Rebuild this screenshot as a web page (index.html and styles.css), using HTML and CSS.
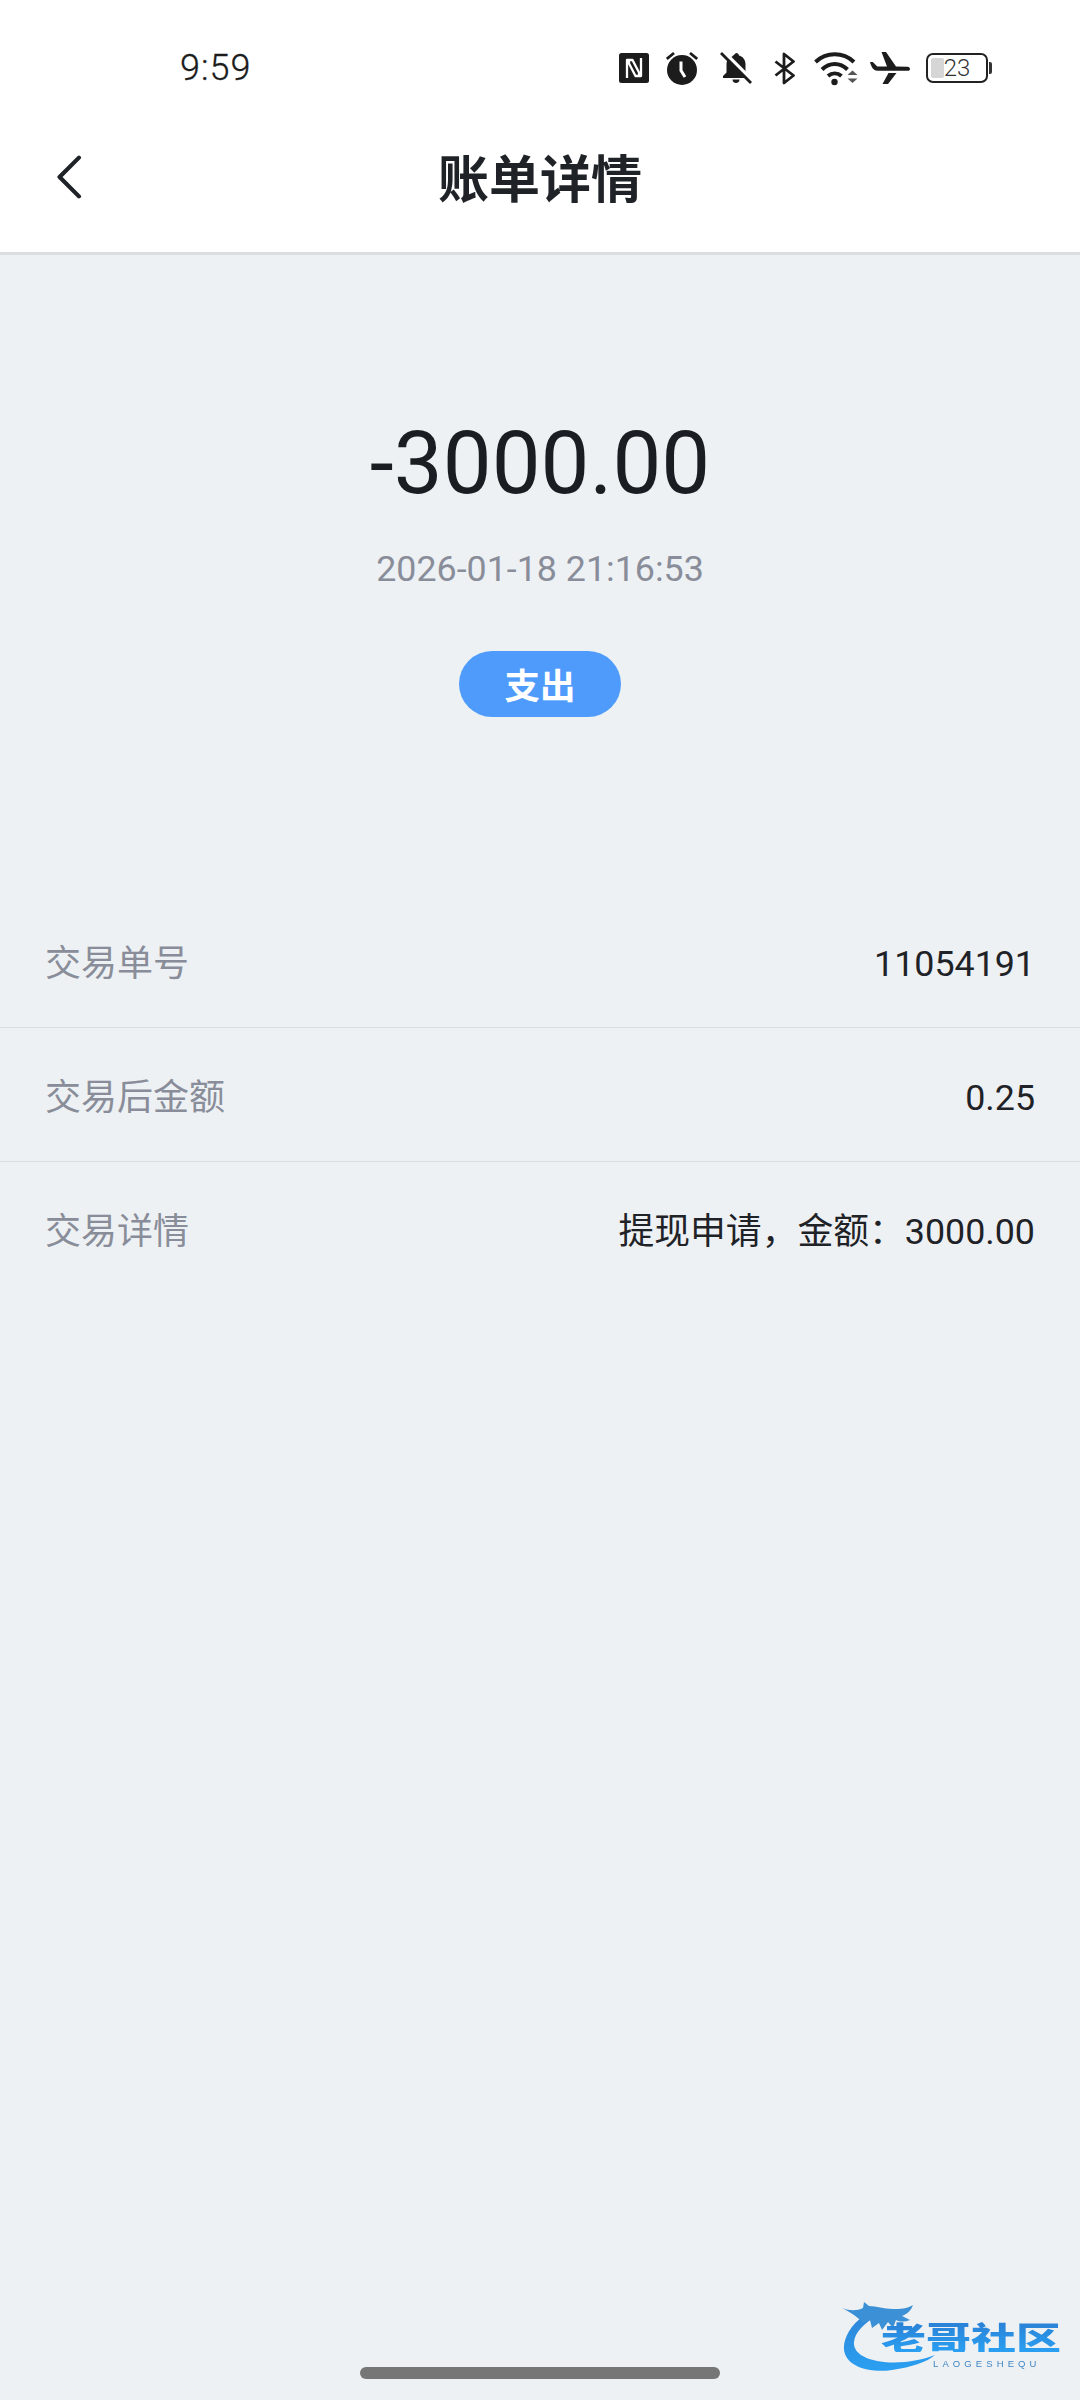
FILE: index.html
```html
<!DOCTYPE html>
<html lang="zh-CN">
<head>
<meta charset="utf-8">
<title>账单详情</title>
<link rel="stylesheet" href="styles.css">
</head>
<body>
<div class="page">
  <div class="top">
    <div class="status">
      <span class="time">9:59</span>
      <div class="status-icons">
        <svg class="ic-nfc" viewBox="0 0 30 30"><rect width="30" height="30" rx="2.500" fill="#1c1c1c"/><path d="M8 25V7h5.500L20 19.500V24" fill="none" stroke="#fff" stroke-width="2.300" stroke-linejoin="round"/><path d="M22 5V23h-5.500L10 10.500V6" fill="none" stroke="#fff" stroke-width="2.300" stroke-linejoin="round"/></svg>
        <svg class="ic-alarm" viewBox="0 0 32 34"><circle cx="16" cy="19" r="15" fill="#1c1c1c"/><path d="M.8 8 8 2M31.200 8 24 2" stroke="#1c1c1c" stroke-width="2.800"/><path d="M15 10.500V19.500L19 26" fill="none" stroke="#fff" stroke-width="3"/></svg>
        <svg class="ic-bell" viewBox="0 0 32 32"><path d="M16 1c1.800 0 2.800 1 3 2.500 4 1 6.500 4.500 6.500 8.500v7.500L29 24v2H3v-2l3.500-3.500V12c0-1 .2-2 .5-3z" fill="#1c1c1c"/><path d="M12.500 27.500h7c0 2-1.500 3.500-3.500 3.500s-3.500-1.500-3.500-3.500z" fill="#1c1c1c"/><path d="M3 -1 33 29" stroke="#fff" stroke-width="3.500"/><path d="M1 1 31 31" stroke="#1c1c1c" stroke-width="2.800"/></svg>
        <svg class="ic-bt" viewBox="0 0 21 33"><path d="M1.500 9.500 19.500 23.500 10 31V2L19.500 9.500 1.500 23.500" fill="none" stroke="#1c1c1c" stroke-width="2.800" stroke-linejoin="round"/></svg>
        <svg class="ic-wifi" viewBox="0 0 44 35"><path d="M1.500 11C12.500 .8 29 .8 40 11" fill="none" stroke="#1c1c1c" stroke-width="4"/><path d="M8 18.500C15.500 11 26 11 33.500 18.500" fill="none" stroke="#1c1c1c" stroke-width="4"/><path d="M14 25C18 21.500 23.500 21.500 27.500 25" fill="none" stroke="#1c1c1c" stroke-width="4"/><circle cx="20.500" cy="31" r="3.200" fill="#1c1c1c"/><path d="M33.500 24 38.500 19.500l5 4.500zM33.500 27.500h10L38.500 32z" fill="#555"/></svg>
        <svg class="ic-plane" viewBox="0 0 40 32"><path d="M0 10h2.800l4.500 4.500h9.700L11.500 0h4.500l10 14.500 11.500.3c2 .2 2.500 1.500 2.500 2.200 0 .8-.5 1.800-2.500 1.800H7.500C3 18.800 1 14 0 10z" fill="#1c1c1c"/><path d="M12.500 32l6-11h8L18 32z" fill="#1c1c1c"/></svg>
        <div class="battery">
          <div class="battery-body"><span class="battery-fill"></span><span class="battery-num">23</span></div>
          <span class="battery-cap"></span>
        </div>
      </div>
    </div>
    <div class="nav">
      <button class="back" aria-label="返回">
        <svg viewBox="0 0 24 42"><path d="M21.500 2.500 3 21l18.500 18.500" fill="none" stroke="#1f2226" stroke-width="4" stroke-linecap="round" stroke-linejoin="round"/></svg>
      </button>
      <h1 class="title">账单详情</h1>
    </div>
  </div>
  <section class="summary">
    <div class="amount">-3000.00</div>
    <div class="date">2026-01-18 21:16:53</div>
    <span class="pill">支出</span>
  </section>
  <section class="rows">
    <div class="row"><span class="label">交易单号</span><span class="value">11054191</span></div>
    <div class="row"><span class="label">交易后金额</span><span class="value">0.25</span></div>
    <div class="row"><span class="label">交易详情</span><span class="value">提现申请，金额：3000.00</span></div>
  </section>
  <div class="home-bar"></div>
  <div class="watermark">
    <svg class="dragon" viewBox="0 0 100 74">
      <defs><linearGradient id="dg" x1="0" y1="0" x2="0" y2="1"><stop offset="0" stop-color="#2f86d8"/><stop offset="1" stop-color="#2aa0f2"/></linearGradient></defs>
      <path d="M22 16C6 26-1 44 3 54c5 14 27 19 47 16 20-3 35-8 43-15-13 5-33 9-51 7C22 60 11 52 12 42c1-10 10-18 22-26z" fill="url(#dg)"/>
      <path d="M0 8c8 3 15 3 21 0l1-6 5 4c8 0 14 3 24 3 7 0 14 0 20-4-2 6-6 9-11 11l8 4c-5 2-10 2-14 0l-3 8-5-6-6 8-3-7-7 5-2-8-7 3C16 17 8 12 0 8z" fill="#3b90d6"/>
    </svg>
    <span class="wm-cn">老哥社区</span>
    <span class="wm-en">LAOGESHEQU</span>
  </div>
</div>
</body>
</html>
```
FILE: styles.css
```css
* { box-sizing: border-box; }
html, body { margin: 0; padding: 0; }
body {
  font-family: Roboto, "Noto Sans CJK SC", sans-serif;
  background: #edf1f4;
}
.page {
  position: relative;
  width: 1080px;
  height: 2400px;
  overflow: hidden;
  background: #edf1f4;
}
.top {
  height: 255px;
  background: #fff;
  border-bottom: 3px solid #dcdee0;
}
.status {
  height: 110px;
  display: flex;
  align-items: center;
  justify-content: space-between;
  padding: 26px 88px 0 180px;
}
.time {
  font-size: 36px;
  font-weight: 300;
  letter-spacing: 1px;
  color: #1c1c1c;
  -webkit-text-stroke: .3px #1c1c1c;
}
.status-icons {
  display: flex;
  align-items: center;
}
.status-icons svg { display: block; flex: none; }
.ic-nfc { width: 30px; height: 30px; margin-right: 17px; }
.ic-alarm { width: 32px; height: 34px; margin-right: 22px; }
.ic-bell { width: 32px; height: 32px; margin-right: 22px; }
.ic-bt { width: 21px; height: 33px; margin-right: 19px; }
.ic-wifi { width: 44px; height: 35px; margin-right: 12px; }
.ic-plane { width: 40px; height: 32px; margin-right: 16px; }
.battery { display: flex; align-items: center; }
.battery-body {
  position: relative;
  width: 62px;
  height: 30px;
  border: 2px solid #222;
  border-radius: 7px;
  display: flex;
  align-items: center;
  justify-content: center;
}
.battery-fill {
  position: absolute;
  left: 3px;
  top: 3px;
  bottom: 3px;
  width: 13px;
  background: #d6d6d6;
  border-radius: 2px;
}
.battery-num {
  position: relative;
  font-size: 24px;
  font-weight: 300;
  color: #333;
  line-height: 1;
}
.battery-cap {
  width: 3px;
  height: 12px;
  margin-left: 1px;
  background: #333;
  border-radius: 0 2px 2px 0;
}
.nav {
  position: relative;
  height: 142px;
  display: flex;
  align-items: flex-start;
  justify-content: center;
  padding-top: 31px;
}
.back {
  position: absolute;
  left: 56px;
  top: 45px;
  width: 26px;
  height: 44px;
  padding: 0;
  border: 0;
  background: none;
}
.back svg { display: block; width: 100%; height: 100%; }
.title {
  margin: 0;
  font-size: 51px;
  font-weight: 700;
  color: #1f2226;
  line-height: 1.4;
  font-family: "Noto Sans CJK SC", sans-serif;
}
.summary {
  display: flex;
  flex-direction: column;
  align-items: center;
  padding-top: 150px;
  height: 639px;
}
.amount {
  font-size: 87px;
  line-height: 116px;
  color: #1a1e23;
}
.date {
  margin-top: 26px;
  font-size: 35.800px;
  line-height: 44px;
  color: #898d99;
}
.pill {
  margin-top: 60px;
  width: 162px;
  height: 66px;
  border-radius: 33px;
  background: #4e9bfb;
  color: #fff;
  font-size: 35.500px;
  font-weight: 700;
  line-height: 66px;
  text-align: center;
  font-family: "Noto Sans CJK SC", sans-serif;
}
.row {
  height: 134px;
  padding: 6px 45px 0;
  display: flex;
  align-items: center;
  justify-content: space-between;
  border-bottom: 1px solid #d9dde1;
  font-size: 35.800px;
  line-height: 44px;
}
.row:last-child { border-bottom: 0; }
.label { color: #898d99; font-size: 36px; }
.value { color: #1f2226; }
.home-bar {
  position: absolute;
  left: 360px;
  bottom: 21px;
  width: 360px;
  height: 12px;
  border-radius: 6px;
  background: #767676;
}
.watermark {
  position: absolute;
  left: 842px;
  top: 2300px;
  width: 222px;
  height: 74px;
  filter: blur(.7px);
}
.dragon {
  position: absolute;
  left: 0;
  top: 0;
  width: 100px;
  height: 74px;
}
.wm-cn {
  position: absolute;
  left: 39px;
  top: 20px;
  font-family: "Noto Sans CJK SC", sans-serif;
  font-size: 45px;
  font-weight: 900;
  line-height: 45px;
  white-space: nowrap;
  color: transparent;
  background: linear-gradient(#2a7fd4, #2aa0f2);
  -webkit-background-clip: text;
  background-clip: text;
  transform: scaleY(.72);
  transform-origin: left top;
}
.wm-en {
  position: absolute;
  left: 91px;
  top: 59px;
  font-family: "Liberation Sans", sans-serif;
  font-size: 9.500px;
  letter-spacing: 4.100px;
  line-height: 10px;
  color: #3f86c6;
}
```
